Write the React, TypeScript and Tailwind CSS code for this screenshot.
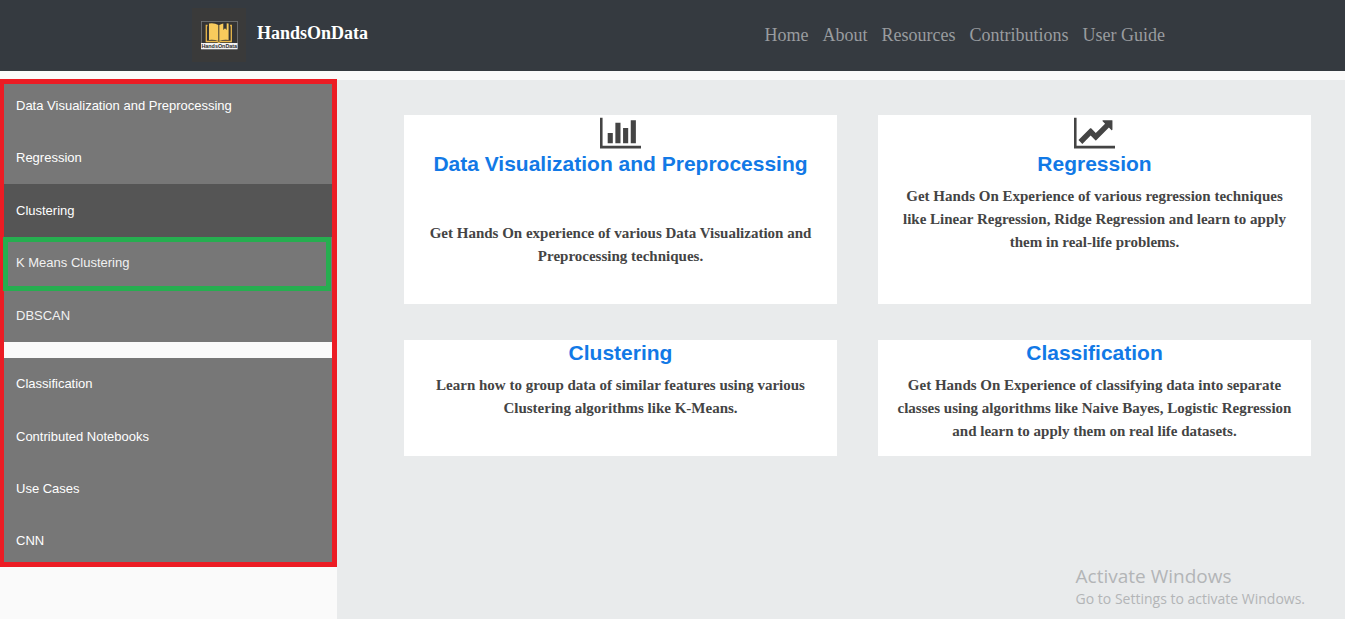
import React from "react";

const navLinks = ["Home", "About", "Resources", "Contributions", "User Guide"];

type Topic = {
  title: string;
  text: string;
  icon?: React.ReactNode;
  spaced?: boolean;
};

function BarChartIcon() {
  return (
    <svg viewBox="0 0 2048 1792" className="h-9 w-[41px] fill-current" aria-hidden="true">
      <path d="M640 896v512h-256v-512h256zm384-512v1024h-256v-1024h256zm1024 1152v128h-2048v-1536h128v1408h1920zm-640-896v768h-256v-768h256zm384-384v1152h-256v-1152h256z" />
    </svg>
  );
}

function LineChartIcon() {
  return (
    <svg viewBox="0 0 2048 1792" className="h-9 w-[41px] fill-current" aria-hidden="true">
      <path d="M2048 1536v128h-2048v-1536h128v1408h1920zm-128-1248v435q0 21-19.5 29.5t-35.5-7.5l-121-121-633 633q-10 10-23 10t-23-10l-233-233-416 416-192-192 585-585q10-10 23-10t23 10l233 233 464-464-121-121q-16-16-7.5-35.5t29.5-19.5h435q14 0 23 9t9 23z" />
    </svg>
  );
}

function Logo() {
  return (
    <svg viewBox="0 0 54 54" className="size-[54px]" role="img" aria-label="HandsOnData logo">
      <rect width="54" height="54" fill="#3a3a3a" />
      <rect x="9.5" y="13.5" width="36" height="27" fill="#343434" stroke="#77797b" strokeWidth="0.8" />
      <path d="M15.500 17.500h-1.200v16h10.700l1.800 1 1.800-1h10.700V17.500h-1.200" fill="none" stroke="#eab94c" strokeWidth="1.300" />
      <path d="M17 15.500q5.500-.8 9.300 1.400v16.200q-3.800-1.800-9.300-1.200z" fill="#f8cb5c" />
      <path d="M36.600 15.500q-5.500-.8-9.300 1.400v16.200q3.800-1.800 9.300-1.200z" fill="#f8cb5c" />
      <path d="M31.300 14.200h3.400v7.800l-1.700-1.800-1.700 1.800z" fill="#343434" />
      <rect x="9" y="35" width="36.500" height="6.300" fill="#f2f2f2" />
      <text x="27.250" y="40" textAnchor="middle" fontSize="5.400" fontWeight="700" fontFamily="Liberation Sans, sans-serif" fill="#2b2b2b">
        HandsOnData
      </text>
    </svg>
  );
}

const topics: Topic[] = [
  {
    title: "Data Visualization and Preprocessing",
    text: "Get Hands On experience of various Data Visualization and Preprocessing techniques.",
    icon: <BarChartIcon />,
    spaced: true,
  },
  {
    title: "Regression",
    text: "Get Hands On Experience of various regression techniques like Linear Regression, Ridge Regression and learn to apply them in real-life problems.",
    icon: <LineChartIcon />,
  },
  {
    title: "Clustering",
    text: "Learn how to group data of similar features using various Clustering algorithms like K-Means.",
  },
  {
    title: "Classification",
    text: "Get Hands On Experience of classifying data into separate classes using algorithms like Naive Bayes, Logistic Regression and learn to apply them on real life datasets.",
  },
];

function SideButton({ label, active, sub, marked }: { label: string; active?: boolean; sub?: boolean; marked?: boolean }) {
  return (
    <button
      type="button"
      className={`relative flex w-full items-center pl-4 text-left ${active ? "bg-[#555555]" : "bg-[#777777]"} ${sub ? "text-[#f1f1f1]" : "text-white"}`}
    >
      {label}
      {marked && <span className="pointer-events-none absolute -bottom-0.5 left-[3px] right-1.5 top-0 z-20 border-5 border-[#26ae50]" />}
    </button>
  );
}

function TopicCard({ title, text, icon, spaced }: Topic) {
  return (
    <article className="flex flex-col items-center bg-white px-4 pb-3 text-center text-[#444444]">
      {icon}
      <h2 className="font-['Liberation_Sans',Arial,sans-serif] text-[21px] leading-[26px] font-bold text-[#1279e6]">
        <a href="#topic">{title}</a>
      </h2>
      <p className={`${spaced ? "mt-[45px]" : "mt-2"} text-[15px] leading-[23px] font-bold`}>{text}</p>
    </article>
  );
}

export default function App() {
  return (
    <div className="relative flex min-h-screen flex-col bg-[#fafafa] font-['Liberation_Serif','Times_New_Roman',serif]">
      <header className="flex h-[71px] items-center justify-between bg-[#353a40] pb-0.5 pl-48 pr-[180px]">
        <a href="#home" className="flex items-center gap-[11px] text-lg font-bold text-white">
          <Logo />
          <span className="pb-1">HandsOnData</span>
        </a>
        <nav className="flex gap-3.5 text-lg text-[#999c9f]">
          {navLinks.map((link) => (
            <a key={link} href="#section">
              {link}
            </a>
          ))}
        </nav>
      </header>

      <div className="flex grow pt-2">
        <aside className="w-[337px] shrink-0 font-['Liberation_Sans',Arial,sans-serif] text-[13px]">
          <div className="relative flex flex-col gap-4">
            <div className="grid h-[263px] grid-rows-5">
              <SideButton label="Data Visualization and Preprocessing" />
              <SideButton label="Regression" />
              <SideButton label="Clustering" active />
              <SideButton label="K Means Clustering" sub marked />
              <SideButton label="DBSCAN" sub />
            </div>
            <div className="grid h-[209px] grid-rows-4">
              <SideButton label="Classification" />
              <SideButton label="Contributed Notebooks" />
              <SideButton label="Use Cases" />
              <SideButton label="CNN" />
            </div>
            <div className="pointer-events-none absolute inset-0 z-10 border-5 border-l-4 border-[#ec1c24]" />
          </div>
        </aside>

        <main className="mt-px grow bg-[#e9ebec] pb-8 pl-[67px] pr-[34px] pt-[35px]">
          <div className="grid grid-cols-2 grid-rows-[189px_116px] gap-x-[41px] gap-y-9">
            {topics.map((topic) => (
              <TopicCard key={topic.title} {...topic} />
            ))}
          </div>
        </main>
      </div>

      <div className="pointer-events-none absolute bottom-2.5 right-10 font-['Open_Sans','Noto_Sans',sans-serif] text-[#b3b5b7]">
        <p className="text-[19px] leading-[26px]">Activate Windows</p>
        <p className="text-sm leading-5">Go to Settings to activate Windows.</p>
      </div>
    </div>
  );
}
